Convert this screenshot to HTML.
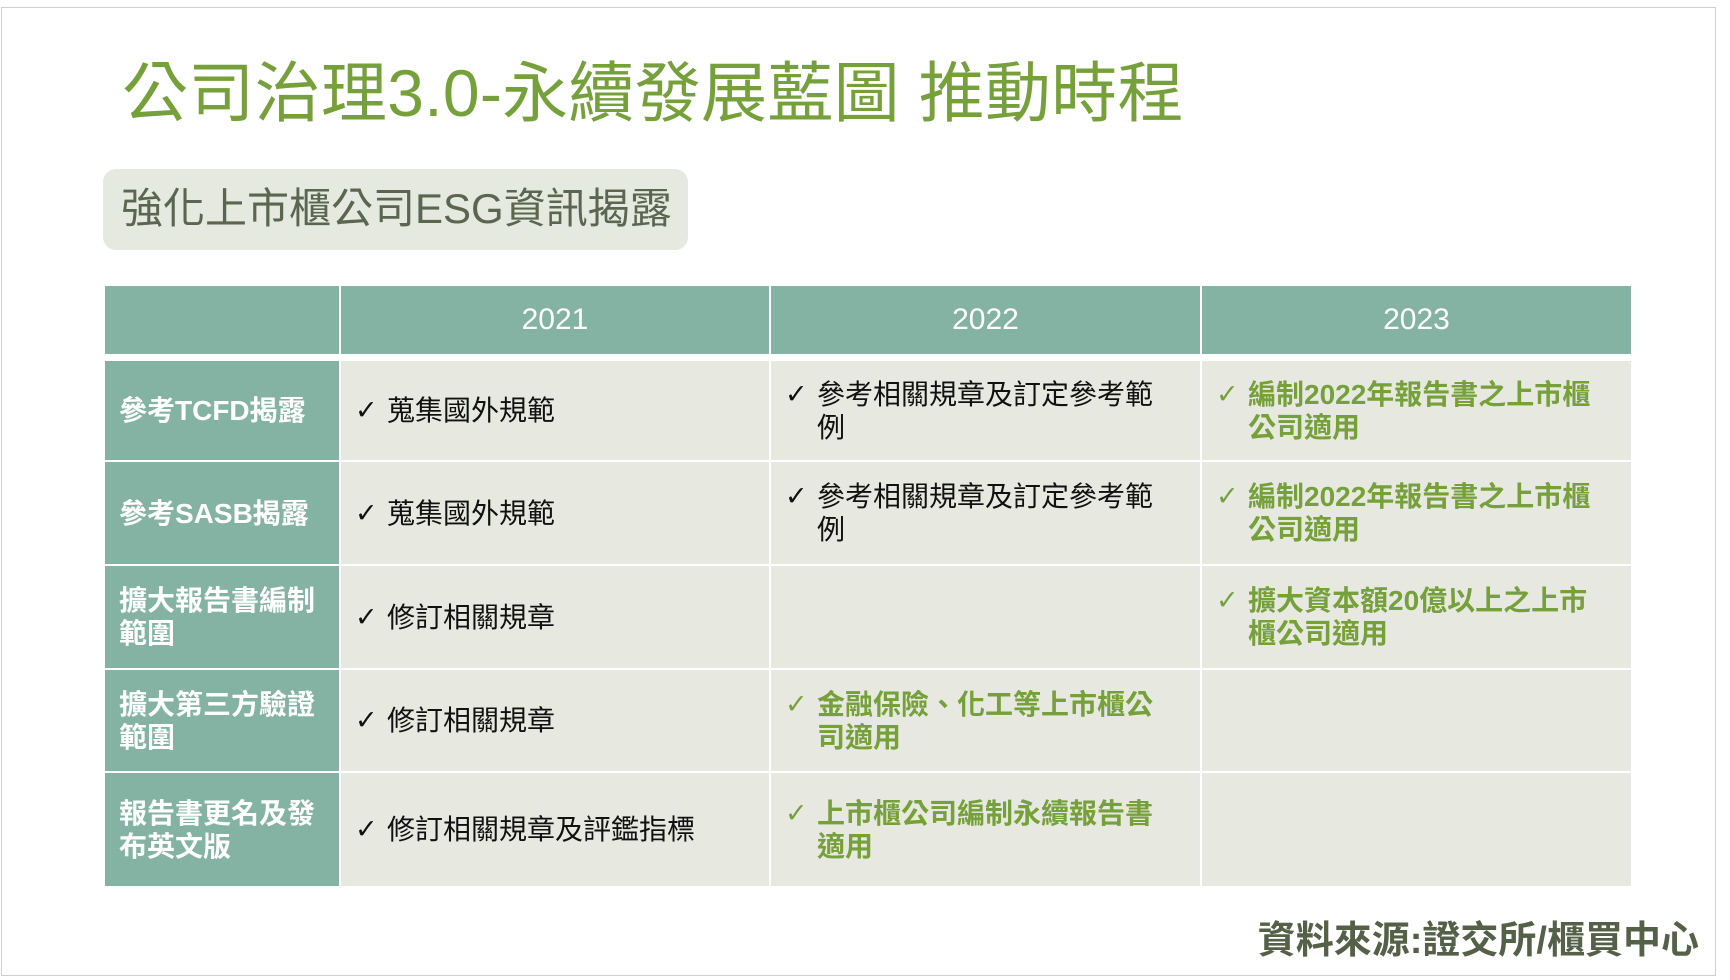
<!DOCTYPE html>
<html><head><meta charset="utf-8"><style>
*{margin:0;padding:0;box-sizing:border-box}
body{width:1730px;height:980px;background:#fff;position:relative;overflow:hidden;font-family:"Liberation Sans","Noto Sans CJK TC",sans-serif}
.frame{position:absolute;left:1px;top:7px;width:1715px;height:969px;border:1px solid #cfcfcf}
.title{position:absolute;left:122px;top:48px;font-size:66px;line-height:90px;color:#76a03a;white-space:nowrap;letter-spacing:0.3px}
.sub{position:absolute;left:103px;top:169px;width:585px;height:81px;background:#e6e9e0;border-radius:13px}
.sub span{position:absolute;left:18px;top:14px;font-size:42px;line-height:52px;color:#5b6650;white-space:nowrap}
.c{position:absolute;display:flex;align-items:center}
.h{background:#84b3a3;color:#fff;font-size:30px;justify-content:center}
.l{background:#84b3a3;color:#fff;font-weight:bold;font-size:28px;line-height:33px;padding-left:14px}
.b{background:#e7e9e1;font-size:28px;line-height:33px;color:#111;padding-left:14px}
.r{display:flex}
.b .k{width:32px;flex:none;font-family:"DejaVu Sans",sans-serif;font-size:27px;line-height:33px}
.g{color:#76a03a;font-weight:bold}
.src{position:absolute;right:31px;top:916px;font-size:38px;line-height:50px;font-weight:bold;color:#556048;white-space:nowrap}
</style></head><body>
<div class="frame"></div>
<div class="title">公司治理3.0-永續發展藍圖 推動時程</div>
<div class="sub"><span>強化上市櫃公司ESG資訊揭露</span></div>

<div class="c h" style="left:105px;top:286px;width:234px;height:68px"></div>
<div class="c h" style="left:341px;top:286px;width:428px;height:68px">2021</div>
<div class="c h" style="left:771px;top:286px;width:429px;height:68px">2022</div>
<div class="c h" style="left:1202px;top:286px;width:429px;height:68px">2023</div>

<!-- row1 -->
<div class="c l" style="left:105px;top:361px;width:234px;height:99px">參考TCFD揭露</div>
<div class="c b" style="left:341px;top:361px;width:428px;height:99px"><div class="r"><span class="k">✓</span><span>蒐集國外規範</span></div></div>
<div class="c b" style="left:771px;top:361px;width:429px;height:99px"><div class="r"><span class="k">✓</span><span>參考相關規章及訂定參考範<br>例</span></div></div>
<div class="c b g" style="left:1202px;top:361px;width:429px;height:99px"><div class="r"><span class="k">✓</span><span>編制2022年報告書之上市櫃<br>公司適用</span></div></div>
<!-- row2 -->
<div class="c l" style="left:105px;top:462px;width:234px;height:102px">參考SASB揭露</div>
<div class="c b" style="left:341px;top:462px;width:428px;height:102px"><div class="r"><span class="k">✓</span><span>蒐集國外規範</span></div></div>
<div class="c b" style="left:771px;top:462px;width:429px;height:102px"><div class="r"><span class="k">✓</span><span>參考相關規章及訂定參考範<br>例</span></div></div>
<div class="c b g" style="left:1202px;top:462px;width:429px;height:102px"><div class="r"><span class="k">✓</span><span>編制2022年報告書之上市櫃<br>公司適用</span></div></div>
<!-- row3 -->
<div class="c l" style="left:105px;top:566px;width:234px;height:102px">擴大報告書編制<br>範圍</div>
<div class="c b" style="left:341px;top:566px;width:428px;height:102px"><div class="r"><span class="k">✓</span><span>修訂相關規章</span></div></div>
<div class="c b" style="left:771px;top:566px;width:429px;height:102px"></div>
<div class="c b g" style="left:1202px;top:566px;width:429px;height:102px"><div class="r"><span class="k">✓</span><span>擴大資本額20億以上之上市<br>櫃公司適用</span></div></div>
<!-- row4 -->
<div class="c l" style="left:105px;top:670px;width:234px;height:101px">擴大第三方驗證<br>範圍</div>
<div class="c b" style="left:341px;top:670px;width:428px;height:101px"><div class="r"><span class="k">✓</span><span>修訂相關規章</span></div></div>
<div class="c b g" style="left:771px;top:670px;width:429px;height:101px"><div class="r"><span class="k">✓</span><span>金融保險、化工等上市櫃公<br>司適用</span></div></div>
<div class="c b" style="left:1202px;top:670px;width:429px;height:101px"></div>
<!-- row5 -->
<div class="c l" style="left:105px;top:773px;width:234px;height:113px">報告書更名及發<br>布英文版</div>
<div class="c b" style="left:341px;top:773px;width:428px;height:113px"><div class="r"><span class="k">✓</span><span>修訂相關規章及評鑑指標</span></div></div>
<div class="c b g" style="left:771px;top:773px;width:429px;height:113px"><div class="r"><span class="k">✓</span><span>上市櫃公司編制永續報告書<br>適用</span></div></div>
<div class="c b" style="left:1202px;top:773px;width:429px;height:113px"></div>

<div class="src">資料來源:證交所/櫃買中心</div>
</body></html>
